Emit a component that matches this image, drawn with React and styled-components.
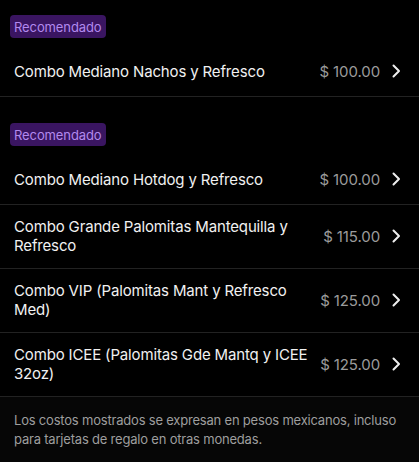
import styled, { createGlobalStyle } from "styled-components";

const GlobalStyle = createGlobalStyle`
	html, body {
		margin: 0;
		padding: 0;
		background: #000;
	}
	body {
		font-family: Inter, "Noto Sans", sans-serif;
		-webkit-font-smoothing: antialiased;
	}
`;

const Page = styled.div`
	width: 419px;
	min-height: 462px;
	background: #000;
	display: flex;
	flex-direction: column;
`;

const Section = styled.section`
	display: flex;
	flex-direction: column;
	align-items: flex-start;
	padding-top: ${(p) => (p.$first ? "15px" : "26px")};
`;

const Badge = styled.span`
	margin-left: 10px;
	margin-bottom: 9px;
	padding: 0 4px;
	height: 23px;
	display: inline-flex;
	align-items: center;
	border-radius: 4px;
	background: #3a1561;
	color: #b289ee;
	font-size: 13px;
	font-weight: 400;
	letter-spacing: -0.1px;
`;

const Row = styled.div`
	align-self: stretch;
	display: flex;
	align-items: center;
	gap: 12px;
	min-height: 50px;
	box-sizing: border-box;
	padding: 12px 18px 13px 14px;
	border-bottom: 1px solid #222;
`;

const Title = styled.div`
	flex: 1;
	color: #f1f1f1;
	font-size: 15px;
	font-weight: 400;
	letter-spacing: -0.15px;
	line-height: 19px;
`;

const Price = styled.div`
	color: #9b9b9b;
	font-size: 15px;
	letter-spacing: -0.1px;
	line-height: 19px;
	white-space: nowrap;
`;

const Chevron = styled.svg`
	flex-shrink: 0;
	width: 9px;
	height: 14px;
`;

const Footer = styled.footer`
	flex: 1;
	background: #060606;
	padding: 14px 14px 16px;
	color: #9e9e9e;
	font-size: 13px;
	letter-spacing: -0.2px;
	line-height: 19px;
`;

function Item({ title, price }) {
	return (
		<Row>
			<Title>{title}</Title>
			<Price>{price}</Price>
			<Chevron viewBox="0 0 9 14" fill="none">
				<polyline
					points="1.5,1.5 7,7 1.5,12.5"
					stroke="#eeeeee"
					strokeWidth="2"
					strokeLinecap="round"
					strokeLinejoin="round"
				/>
			</Chevron>
		</Row>
	);
}

export default function App() {
	return (
		<Page>
			<GlobalStyle />
			<Section $first>
				<Badge>Recomendado</Badge>
				<Item title="Combo Mediano Nachos y Refresco" price="$ 100.00" />
			</Section>
			<Section>
				<Badge>Recomendado</Badge>
				<Item title="Combo Mediano Hotdog y Refresco" price="$ 100.00" />
				<Item
					title="Combo Grande Palomitas Mantequilla y Refresco"
					price="$ 115.00"
				/>
				<Item
					title="Combo VIP (Palomitas Mant y Refresco Med)"
					price="$ 125.00"
				/>
				<Item
					title="Combo ICEE (Palomitas Gde Mantq y ICEE 32oz)"
					price="$ 125.00"
				/>
			</Section>
			<Footer>
				Los costos mostrados se expresan en pesos mexicanos, incluso para
				tarjetas de regalo en otras monedas.
			</Footer>
		</Page>
	);
}
